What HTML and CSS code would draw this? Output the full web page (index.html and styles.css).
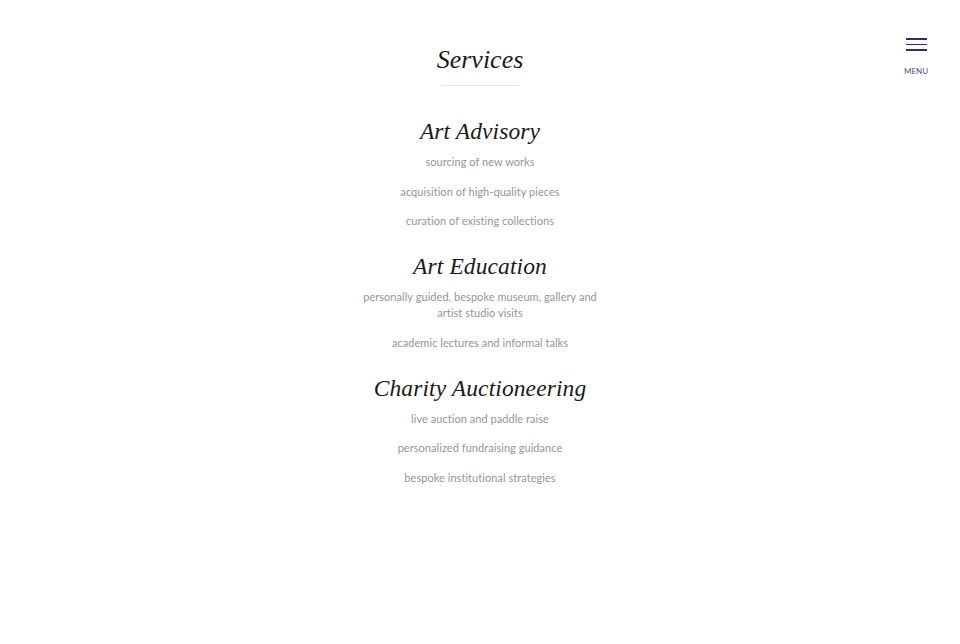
FILE: index.html
```html
<!DOCTYPE html>
<html lang="en">
<head>
<meta charset="utf-8">
<title>Services</title>
<link rel="stylesheet" href="styles.css">
</head>
<body>
<button class="menu" type="button">
  <span class="burger"><i></i><i></i><i></i></span>
  <span class="menu-label">MENU</span>
</button>
<main class="page">
  <h1 class="title">Services</h1>
  <hr class="rule">
  <section class="service">
    <h2 class="service-title">Art Advisory</h2>
    <ul class="items">
      <li>sourcing of new works</li>
      <li>acquisition of high-quality pieces</li>
      <li>curation of existing collections</li>
    </ul>
  </section>
  <section class="service">
    <h2 class="service-title">Art Education</h2>
    <ul class="items">
      <li>personally guided, bespoke museum, gallery and artist studio visits</li>
      <li>academic lectures and informal talks</li>
    </ul>
  </section>
  <section class="service">
    <h2 class="service-title">Charity Auctioneering</h2>
    <ul class="items">
      <li>live auction and paddle raise</li>
      <li>personalized fundraising guidance</li>
      <li>bespoke institutional strategies</li>
    </ul>
  </section>
</main>
</body>
</html>
```
FILE: styles.css
```css
html, body {
  margin: 0;
  padding: 0;
  background: #ffffff;
}
body {
  font-family: "Lato", "Open Sans", sans-serif;
}
.page {
  display: flex;
  flex-direction: column;
  align-items: center;
  padding-top: 42px;
}
.title {
  margin: 0;
  font-family: "Liberation Serif", "DejaVu Serif", serif;
  font-style: italic;
  font-weight: 400;
  font-size: 26px;
  line-height: 36px;
  color: #1a1a1a;
}
.rule {
  width: 77px;
  height: 1px;
  border: 0;
  background: #e2e2e2;
  margin: 7px 0 30px;
}
.service {
  display: flex;
  flex-direction: column;
  align-items: center;
  margin-bottom: 22px;
}
.service-title {
  margin: 0 0 8px;
  font-family: "Liberation Serif", "DejaVu Serif", serif;
  font-style: italic;
  font-weight: 400;
  font-size: 23.5px;
  line-height: 30px;
  letter-spacing: 0.1px;
  color: #1a1a1a;
}
.items {
  list-style: none;
  margin: 0;
  padding: 0;
  width: 240px;
  display: flex;
  flex-direction: column;
  gap: 13.5px;
  text-align: center;
  font-size: 11px;
  line-height: 16px;
  color: #959595;
  letter-spacing: 0.05px;
}
.menu {
  position: absolute;
  top: 38px;
  right: 33px;
  width: 22px;
  background: none;
  border: 0;
  padding: 0;
  display: flex;
  flex-direction: column;
  align-items: center;
  cursor: pointer;
}
.burger {
  display: flex;
  flex-direction: column;
  gap: 4px;
  width: 21px;
}
.burger i {
  display: block;
  height: 1.5px;
  background: #2b2f6e;
}
.menu-label {
  margin-top: 15px;
  font-family: "Lato", "Open Sans", sans-serif;
  font-size: 8px;
  line-height: 10px;
  letter-spacing: 0;
  color: #4a4d8a;
  white-space: nowrap;
}
```
